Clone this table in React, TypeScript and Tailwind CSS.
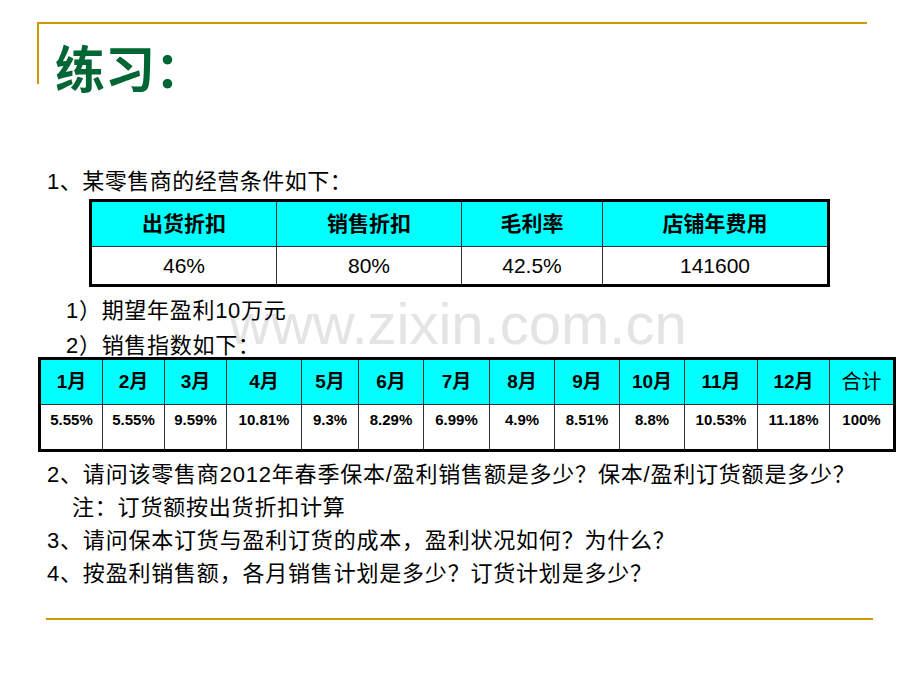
const months = [
  { m: '1月', v: '5.55%' },
  { m: '2月', v: '5.55%' },
  { m: '3月', v: '9.59%' },
  { m: '4月', v: '10.81%' },
  { m: '5月', v: '9.3%' },
  { m: '6月', v: '8.29%' },
  { m: '7月', v: '6.99%' },
  { m: '8月', v: '4.9%' },
  { m: '9月', v: '8.51%' },
  { m: '10月', v: '8.8%' },
  { m: '11月', v: '10.53%' },
  { m: '12月', v: '11.18%' },
];

const terms = [
  { k: '出货折扣', v: '46%' },
  { k: '销售折扣', v: '80%' },
  { k: '毛利率', v: '42.5%' },
  { k: '店铺年费用', v: '141600' },
];

export default function App() {
  return (
    <div className="relative w-[920px] h-[690px] overflow-hidden bg-white text-black font-['Liberation_Sans','Noto_Sans_CJK_SC',sans-serif]">
      {/* watermark */}
      <div className="absolute left-[229px] top-[295px] text-[58px] leading-none text-[#e4e4e4] whitespace-nowrap">
        www.zixin.com.cn
      </div>

      <div className="relative">
        {/* Title frame */}
        <div className="ml-[37px] mt-[22px] w-[830px] h-[62px] border-t-2 border-l-2 border-[#cc9900] pl-[16px] pt-[22px]">
          <h1 className="text-[50px] leading-none font-bold text-[#006633] whitespace-nowrap">练习：</h1>
        </div>

        <div className="pl-[47px]">
          <p className="mt-[81px] text-[22px] leading-[33px] tracking-[0.5px] whitespace-nowrap">1、某零售商的经营条件如下：</p>
        </div>

        {/* Table 1 */}
        <div className="ml-[89px] mt-px w-[741px] border-[3px] border-black">
          <div className="grid grid-cols-[184px_185px_141px_1fr]">
            {terms.map((t, i) => (
              <div
                key={t.k}
                className={`h-[45px] bg-[#00ffff] flex items-center justify-center text-[21px] font-bold border-b border-[#333] ${i > 0 ? 'border-l' : ''}`}
              >
                {t.k}
              </div>
            ))}
            {terms.map((t, i) => (
              <div
                key={t.v}
                className={`h-[37px] flex items-center justify-center text-[21px] border-[#333] ${i > 0 ? 'border-l' : ''}`}
              >
                {t.v}
              </div>
            ))}
          </div>
        </div>

        <div className="pl-[66px] text-[22px] tracking-[0.7px] whitespace-nowrap">
          <p className="mt-[10px] leading-[28px]">1）期望年盈利10万元</p>
          <p className="mt-[9px] leading-[24px]">2）销售指数如下：</p>
        </div>

        {/* Table 2 */}
        <div className="ml-[38px] -mt-px w-[858px] border-[3px] border-black">
          <div className="grid grid-cols-[61px_62px_62px_75px_57px_65px_66px_65px_65px_65px_73px_72px_1fr]">
            {months.map((c, i) => (
              <div
                key={c.m}
                className={`h-[45px] bg-[#00ffff] flex items-center justify-center text-[19px] font-bold border-b border-[#333] ${i > 0 ? 'border-l' : ''}`}
              >
                {c.m}
              </div>
            ))}
            <div className="h-[45px] bg-[#00ffff] flex items-center justify-center text-[20px] border-b border-l border-[#333]">
              合计
            </div>
            {months.map((c, i) => (
              <div
                key={c.v + i}
                className={`h-[44px] pt-[7px] text-center text-[15px] leading-[16px] font-bold border-[#333] ${i > 0 ? 'border-l' : ''}`}
              >
                {c.v}
              </div>
            ))}
            <div className="h-[44px] pt-[7px] text-center text-[15px] leading-[16px] font-bold border-l border-[#333]">100%</div>
          </div>
        </div>

        {/* Questions */}
        <div className="pl-[47px] mt-[6px] text-[22px] leading-[33px] tracking-[0.8px] whitespace-nowrap">
          <p>2、请问该零售商2012年春季保本/盈利销售额是多少？保本/盈利订货额是多少？</p>
          <p className="pl-[25px]">注：订货额按出货折扣计算</p>
          <p>3、请问保本订货与盈利订货的成本，盈利状况如何？为什么？</p>
          <p>4、按盈利销售额，各月销售计划是多少？订货计划是多少？</p>
        </div>

        <div className="ml-[46px] mt-[28px] w-[827px] h-[2px] bg-[#cc9900]" />
      </div>
    </div>
  );
}
